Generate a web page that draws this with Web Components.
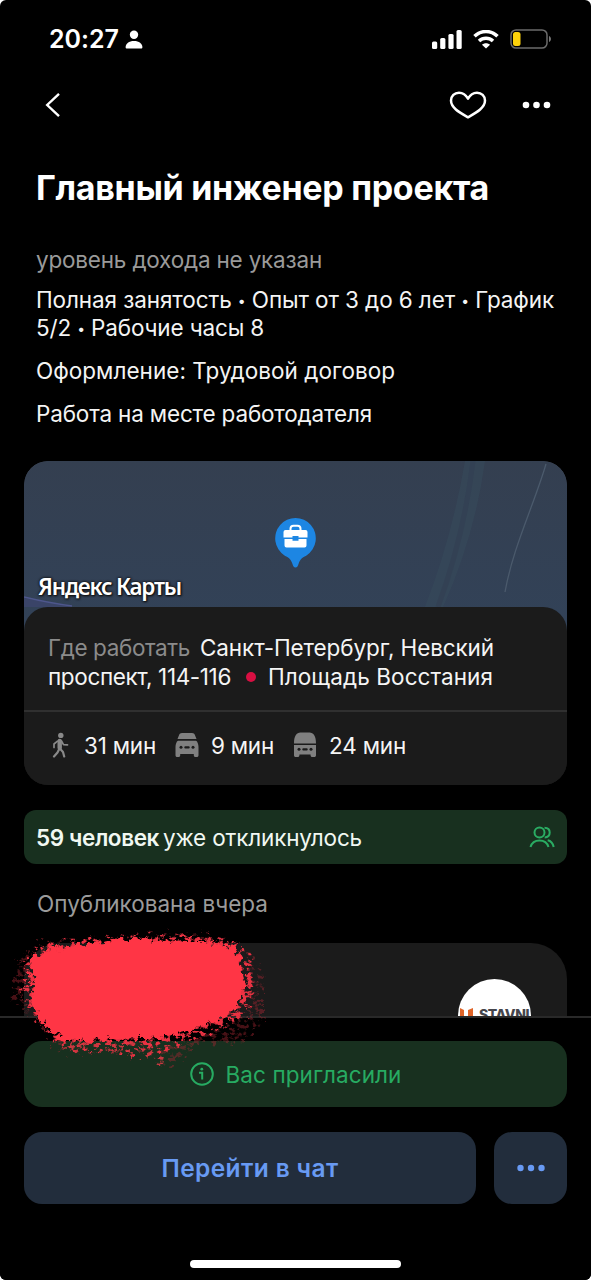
<!DOCTYPE html>
<html lang="ru">
<head>
<meta charset="utf-8">
<title>Главный инженер проекта</title>
<style>
html,body{margin:0;background:#fff}
body{font-family:Inter,"Liberation Sans",sans-serif}
</style>
</head>
<body>
<vacancy-screen></vacancy-screen>
<script>
const define=(name,html,after)=>{
  const t=document.createElement('template');t.innerHTML=html;
  customElements.define(name,class extends HTMLElement{
    connectedCallback(){
      if(this.shadowRoot)return;
      this.attachShadow({mode:'open'}).append(t.content.cloneNode(true));
      if(after)after(this);
    }
  });
};

// One line of text, tracked so that it takes exactly the width in "w".
define('text-line',`<style>
:host{display:inline-block;white-space:pre}
::slotted(i){font-style:normal;font-size:.62em;line-height:0;vertical-align:.12em}
</style><slot></slot>`,el=>{
  const w=+el.getAttribute('w');
  const n=[...el.textContent].length;
  const now=el.getBoundingClientRect().width;
  if(w&&now)el.style.letterSpacing=((w-now)/n).toFixed(3)+'px';
});

define('status-bar',`<style>
:host{display:flex;height:78px;align-items:center;padding:0 39px 0 49px;box-sizing:border-box;justify-content:space-between;font-size:25px;font-weight:600}
.l,.r{display:flex;align-items:center}
.l{gap:6px}.r{gap:11px}
svg{display:block}
</style>
<div class="l"><text-line w="70">20:27</text-line>
<svg width="18" height="19" viewBox="0 0 18 19" fill="#fff"><circle cx="9" cy="4.700" r="4.200"/><path d="M.6 17.200C.6 13.600 4 11 9 11s8.400 2.600 8.400 6.200c0 .9-.5 1.300-1.300 1.300H1.900C1.100 18.500.6 18.100.6 17.200Z"/></svg></div>
<div class="r">
<svg width="30" height="19" viewBox="0 0 30 19" fill="#fff"><rect x="0" y="11.500" width="5.200" height="7.500" rx="1.500"/><rect x="8.200" y="8" width="5.200" height="11" rx="1.500"/><rect x="16.400" y="4" width="5.200" height="15" rx="1.500"/><rect x="24.500" y="0" width="5.200" height="19" rx="1.500"/></svg>
<svg width="26" height="19" viewBox="0 0 26 19" fill="none" stroke="#fff" stroke-width="3.500"><path d="M1.500 6.300C8-.1 18-.1 24.500 6.300"/><path d="M6 11c4-3.700 10-3.700 14 0"/><path d="M13 18.600 9 14.700c2.300-2 5.700-2 8 0Z" fill="#fff" stroke="none"/></svg>
<svg width="42" height="20" viewBox="0 0 42 20"><rect x="1" y=".9" width="36" height="18.200" rx="5" fill="none" stroke="#6b6b6b" stroke-width="1.500"/><rect x="3" y="3" width="7.500" height="14" rx="2.500" fill="#fdd20a"/><path d="M39 7c2.600.8 2.600 5.200 0 6Z" fill="#777"/></svg>
</div>`);

define('nav-bar',`<style>
:host{display:flex;height:53px;align-items:center;padding:0 40px 0 44px}
svg{display:block}.heart{margin-left:auto;margin-right:35px}
</style>
<svg width="18" height="26" viewBox="0 0 18 26" fill="none" stroke="#fff" stroke-width="2.400"><path d="M15 1.800 3.200 13 15 24.200"/></svg>
<svg class="heart" width="38" height="28" viewBox="0 0 38 28" fill="none" stroke="#fff" stroke-width="2.500" stroke-linejoin="round"><path d="M19 26.300C11.800 22.100 2 17.300 2 9.600 2 5 5.500 1.700 10 1.700c4 0 7 2.400 9 6 2-3.600 5-6 9-6 4.500 0 8 3.300 8 7.900 0 7.700-9.800 12.500-17 16.700Z"/></svg>
<svg width="29" height="8" viewBox="0 0 29 8" fill="#fff"><circle cx="4" cy="4" r="3.300"/><circle cx="14.500" cy="4" r="3.300"/><circle cx="25" cy="4" r="3.300"/></svg>`);

define('vacancy-summary',`<style>
:host{display:block;padding:37px 0 33px 36px;font-size:22.500px;line-height:28px;color:#f4f4f4}
h1{margin:0;font-size:34px;line-height:40px;color:#fff;font-weight:700}
p{margin:0}
.pay{color:#9a9a9a;margin-top:38px}
.terms{margin-top:12px}
.form{margin-top:15px}
.place{margin-top:15px}
text-line{display:block;width:max-content}
</style>
<h1><text-line w="453">Главный инженер проекта</text-line></h1>
<p class="pay"><text-line w="286">уровень дохода не указан</text-line></p>
<p class="terms"><text-line w="518">Полная занятость <i>•</i> Опыт от 3 до 6 лет <i>•</i> График</text-line><text-line w="228">5/2 <i>•</i> Рабочие часы 8</text-line></p>
<p class="form"><text-line w="359">Оформление: Трудовой договор</text-line></p>
<p class="place"><text-line w="336">Работа на месте работодателя</text-line></p>`);

define('map-preview',`<style>
:host{display:block;height:170px;position:relative;background:#333f51;border-radius:24px 24px 0 0;overflow:hidden}
svg{display:block}
.brand{position:absolute;left:14px;top:110px;font:600 22.500px/32px "Noto Sans","Open Sans",sans-serif;color:#fff;text-shadow:0 0 3px #111,0 0 2px #111,1px 1px 2px #111}
</style>
<svg width="543" height="170" viewBox="0 0 543 170">
<defs><linearGradient id="g" x2="0" y2="1"><stop stop-color="#343f50"/><stop offset="1" stop-color="#324258"/></linearGradient></defs>
<rect width="543" height="170" fill="url(#g)"/>
<path d="M441 0h20q-10 75-42 146h-18q27-70 40-146Z" fill="#374a5b" opacity=".55"/>
<path d="M449 0q-9 75-35 146" stroke="#334154" stroke-width="5" fill="none"/>
<path d="M522 3C510 44 489 86 481 131" stroke="#4b5a6c" stroke-width="1.300" fill="none"/>
<path d="M0 137q25 5 48 9H0Z" fill="#3a4468"/><path d="M0 136q25 6 48 9" stroke="#4e568c" stroke-width="1.500" fill="none"/>
<path d="M271.500 106.500c-1.800 0-2.300-1.500-3-3.500-2-6-4.500-6.700-8-8.600a20.300 20.300 0 1 1 22 0c-3.500 1.900-6 2.600-8 8.600-.7 2-1.200 3.500-3 3.500Z" fill="#1d86e3"/>
<g fill="#fff"><path d="M266.500 69.500v-1.700a3 3 0 0 1 3-3h4a3 3 0 0 1 3 3v1.700" fill="none" stroke="#fff" stroke-width="2"/><path d="M261.500 69h20a2 2 0 0 1 2 2v5.500h-9V75h-6v1.500h-9V71a2 2 0 0 1 2-2Z"/><path d="M260.500 78h8v1.700h6V78h8v6.500a2 2 0 0 1-2 2h-18a2 2 0 0 1-2-2Z"/></g>
</svg>
<div class="brand"><text-line w="143">Яндекс Карты</text-line></div>`);

define('travel-time',`<style>
:host{display:flex;align-items:center}
::slotted(svg){display:block;flex:none}
</style><slot></slot>`);

define('place-card',`<style>
:host{display:block;margin:0 24px;border-radius:24px;background:#1b1b1b;overflow:hidden;color:#f5f5f5;font-size:22.500px;height:324px}
.info{position:relative;margin-top:-24px;height:178px;background:#1b1b1b;border-radius:24px 24px 0 0}
.addr{height:105px;box-sizing:border-box;padding:26px 24px 0;line-height:29px;border-bottom:2px solid #303030}
.addr div{display:flex;align-items:center;height:29px}
.muted{color:#8b8b8b}
.dot{width:10px;height:10px;border-radius:5px;background:#d80f42;margin:0 12px 0 15px}
.times{display:flex;height:66px;align-items:center}
</style>
<map-preview></map-preview>
<div class="info">
<div class="addr">
<div><text-line class="muted" w="142" style="margin-right:10px">Где работать</text-line><text-line w="294">Санкт-Петербург, Невский</text-line></div>
<div><text-line w="183">проспект, 114-116</text-line><span class="dot"></span><text-line w="225">Площадь Восстания</text-line></div>
</div>
<div class="times">
<travel-time style="margin-left:28px"><svg width="18" height="26" viewBox="0 0 18 26" fill="none" stroke="#898989" stroke-linecap="round" stroke-linejoin="round"><circle cx="8.800" cy="3.400" r="2.700" fill="#898989" stroke="none"/><path d="M7.700 9v7" stroke-width="4.400"/><path d="M5.500 9.200 2 12v3.500M9.500 9l2 3.700 4 .2" stroke-width="1.700"/><path d="M7 17.500 5.500 20.500 2 24.500M8.300 17l2.700 3 1.200 4.500" stroke-width="2.200"/></svg><text-line w="72" style="margin-left:14px">31 мин</text-line></travel-time>
<travel-time style="margin-left:19px"><svg width="24" height="26" viewBox="0 0 24 26" fill="#808080"><path d="M7 1h10c1.600 0 2.300.8 2.800 1.800L21.500 7h-19l1.700-4.200C4.700 1.800 5.400 1 7 1ZM3 8.700h18c1.500.6 2.500 3.700 2.500 6.300v8.200c0 1-.7 1.800-1.700 1.800h-1.300c-1 0-1.700-.8-1.700-1.800V22H5.200v1.200c0 1-.7 1.800-1.700 1.800H2.200C1.200 25 .5 24.200.5 23.200V15C.5 12.400 1.500 9.300 3 8.700Z"/><g fill="#1b1b1b"><circle cx="6" cy="15.300" r="1.500"/><circle cx="18" cy="15.300" r="1.500"/><rect x="9.300" y="14.300" width="5.400" height="2.200" rx="1"/></g></svg><text-line w="63" style="margin-left:12px">9 мин</text-line></travel-time>
<travel-time style="margin-left:19px"><svg width="24" height="26" viewBox="0 0 24 26" fill="#808080"><path d="M7.500.5h9C20.500.5 23 4 23 11.500H1C1 4 3.500.5 7.500.5ZM1 13h22v10.200c0 1-.7 1.800-1.700 1.800h-2c-1 0-1.700-.8-1.700-1.800V22.500H6.400v.7c0 1-.7 1.800-1.700 1.800h-2c-1 0-1.700-.8-1.700-1.800Z"/><g fill="#1b1b1b"><circle cx="6" cy="17.300" r="1.500"/><circle cx="18" cy="17.300" r="1.500"/><rect x="9.300" y="16.300" width="5.400" height="2.200" rx="1"/></g></svg><text-line w="77" style="margin-left:12px">24 мин</text-line></travel-time>
</div>
</div>`);

define('responses-banner',`<style>
:host{display:flex;align-items:center;margin:25px 24px 0;height:54px;border-radius:12px;background:#18301f;color:#f1f8f2;font-size:22.500px;padding:0 12px 0 12px}
b{font-weight:600;margin-right:4px}svg{margin-left:auto;display:block}
</style>
<b><text-line w="123">59 человек</text-line></b><text-line w="199">уже откликнулось</text-line>
<svg width="26" height="22" viewBox="0 0 26 22" fill="none" stroke="#2aac63" stroke-width="2"><circle cx="10.500" cy="6.500" r="5"/><path d="M1.500 21c1.200-4 4.500-6.500 9-6.500s7.800 2.500 9 6.500"/><path d="M15.500 1.700c3.200.1 5.200 2 5.200 4.800s-2 4.800-5 4.900M18.700 14.200c3.200.6 5.200 3 6 6.800"/></svg>`);

define('employer-card',`<style>
:host{display:block;margin:0 24px;height:73px;background:#1b1b1b;border-radius:36px 36px 0 0;overflow:hidden}
.logo{width:73px;height:73px;border-radius:50%;background:#fff;margin:36px 36px 0 auto;position:relative;overflow:hidden}
svg{display:block}
.n{position:absolute;left:21px;top:27px;font:800 14px/18px Inter,sans-serif;color:#45454b}
</style>
<div class="logo"><svg width="73" height="73" viewBox="0 0 73 73"><path d="m2 29 4 2v14H2ZM10 31l5-2v16h-5Z" fill="#df6428"/></svg><div class="n"><text-line w="50">STAVNI</text-line></div></div>`);

define('bottom-actions',`<style>
:host{display:block;border-top:2px solid #292929;height:264px;box-sizing:border-box;background:#000;padding:23px 24px 0}
.invite{height:66px;border-radius:18px;background:#18301f;color:#27ab62;display:flex;align-items:center;justify-content:center;gap:12px;font-size:22.500px}
.row{display:flex;gap:18px;margin-top:25px}
.btn{height:72px;border-radius:18px;background:#222d3c;color:#689af3;display:flex;align-items:center;justify-content:center;font-size:24.500px;font-weight:600}
.chat{flex:1}.more{width:73px}
.home{width:211px;height:8px;border-radius:4px;background:#fff;margin:56px auto 0}
svg{display:block}
</style>
<div class="invite"><svg width="24" height="24" viewBox="0 0 24 24" fill="none" stroke="#27ab62" stroke-width="2"><circle cx="12" cy="12" r="10.800"/><path d="M9 10.700h3.200V17.500"/><circle cx="11.800" cy="7.200" r="1.400" fill="#27ab62" stroke="none"/></svg><text-line w="176">Вас пригласили</text-line></div>
<div class="row"><div class="btn chat"><text-line w="177">Перейти в чат</text-line></div><div class="btn more"><svg width="28" height="8" viewBox="0 0 28 8" fill="#689af3"><circle cx="3.500" cy="4" r="3.200"/><circle cx="14" cy="4" r="3.200"/><circle cx="24.500" cy="4" r="3.200"/></svg></div></div>
<div class="home"></div>`);

// Marker stroke that hides the employer's name.
define('red-scribble',`<style>:host{display:block}svg{display:block}</style>
<svg width="290" height="160" viewBox="0 920 290 160">
<defs>
<filter id="rough" x="-20%" y="-20%" width="140%" height="140%"><feTurbulence type="fractalNoise" baseFrequency=".16" numOctaves="4" seed="4"/><feDisplacementMap in="SourceGraphic" scale="15" xChannelSelector="R" yChannelSelector="G"/><feGaussianBlur stdDeviation=".6"/></filter>
<filter id="dust" x="-20%" y="-20%" width="140%" height="140%"><feTurbulence type="fractalNoise" baseFrequency=".17 .24" numOctaves="4" seed="9" result="n"/><feColorMatrix in="n" values="0 0 0 0 0 0 0 0 0 0 0 0 0 0 0 0 0 0 7 -3.400" result="m"/><feDisplacementMap in="SourceGraphic" in2="n" scale="18" xChannelSelector="R" yChannelSelector="G" result="d"/><feComposite in="d" in2="m" operator="in"/><feGaussianBlur stdDeviation=".5"/></filter>
</defs>
<path d="M18 958 40 943 110 937 198 932 238 944 254 960 264 980 264 1022 240 1042 200 1044 168 1066 150 1055 60 1052 34 1020 12 1000Z" fill="#a02632" filter="url(#dust)" opacity=".45"/>
<path d="M26 958 40 946 110 938 195 936 238 944 250 960 255 985 248 1012 222 1028 185 1041 152 1055 64 1050 36 1020 22 1000Z" fill="#e93342" filter="url(#dust)"/>
<path d="M30 961 44 950 85 944 130 939 190 940 234 946 241 960 245 985 240 1002 222 1020 185 1032 160 1038 100 1041 62 1040 42 1023 33 1003Z" fill="#ff3445" filter="url(#rough)"/>
<path d="M62 1045q45 0 75 5l28 12" fill="none" stroke="#c8393f" stroke-width="5" filter="url(#dust)"/>
</svg>`);

define('vacancy-screen',`<style>
:host{display:block;position:relative;width:591px;height:1280px;background:#000;color:#fff;border-radius:6px;overflow:hidden}
.pub{height:79px;display:flex;align-items:center;padding-left:37px;font-size:22.500px;color:#9b9b9b}
red-scribble{position:absolute;left:0;top:920px}
</style>
<status-bar></status-bar>
<nav-bar></nav-bar>
<vacancy-summary></vacancy-summary>
<place-card></place-card>
<responses-banner></responses-banner>
<div class="pub"><text-line w="231">Опубликована вчера</text-line></div>
<employer-card></employer-card>
<bottom-actions></bottom-actions>
<red-scribble></red-scribble>`);
</script>
</body>
</html>
